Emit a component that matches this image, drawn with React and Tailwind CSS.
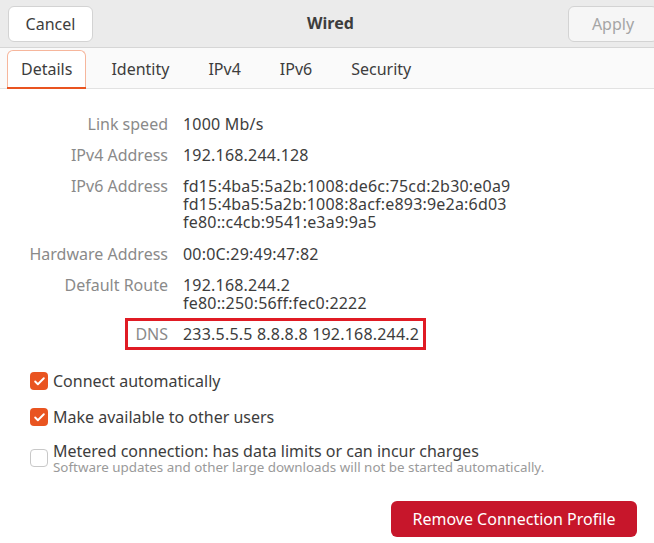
import { Check } from 'lucide-react'

const rows = [
  { label: 'Link speed', values: ['1000 Mb/s'] },
  { label: 'IPv4 Address', values: ['192.168.244.128'] },
  {
    label: 'IPv6 Address',
    values: ['fd15:4ba5:5a2b:1008:de6c:75cd:2b30:e0a9', 'fd15:4ba5:5a2b:1008:8acf:e893:9e2a:6d03', 'fe80::c4cb:9541:e3a9:9a5'],
  },
  { label: 'Hardware Address', values: ['00:0C:29:49:47:82'] },
  { label: 'Default Route', values: ['192.168.244.2', 'fe80::250:56ff:fec0:2222'] },
]

const tabs = ['Details', 'Identity', 'IPv4', 'IPv6', 'Security']

const CheckBox = ({ checked }) =>
  checked ? (
    <div className="w-[18px] h-[18px] rounded-[4px] bg-[#e95420] flex items-center justify-center shrink-0">
      <Check size={13} strokeWidth={3.5} className="text-white" />
    </div>
  ) : (
    <div className="w-[18px] h-[18px] rounded-[4px] border border-[#c8c8c8] bg-white shrink-0" />
  )

export default function App() {
  return (
    <div className="w-[654px] h-[543px] bg-white text-[#3d3d3d] overflow-hidden font-['Noto_Sans',sans-serif] text-[16px]">
      {/* Header */}
      <div className="h-[48px] bg-[#ebebeb] border-b border-[#d6d6d6] flex items-center px-2">
        <button className="h-[36px] w-[85px] rounded-[6px] bg-white border border-[#d3d3d3]">Cancel</button>
        <div className="flex-1 text-center font-bold text-[16px] -mt-[2px]">Wired</div>
        <button className="h-[36px] w-[90px] rounded-[6px] bg-[#f6f6f6] border border-[#d3d3d3] text-[#a5a5a5] mr-[-12px]">Apply</button>
      </div>

      {/* Tabs */}
      <div className="h-[41px] bg-[#fafafa] border-b border-[#e2e2e2] flex items-start gap-[11px] pl-[7px]">
        {tabs.map((t, i) => (
          <div key={t} className="flex flex-col">
            <div
              className={
                'h-[37px] mt-[2px] flex items-center px-[13px] rounded-t-[6px] ' +
                (i === 0 ? 'border border-b-0 border-[#f6b69c] bg-white' : 'border border-transparent')
              }
            >
              {t}
            </div>
            <div className={'h-[2px] ' + (i === 0 ? 'bg-[#e95420]' : '')} />
          </div>
        ))}
      </div>

      {/* Details */}
      <div className="pt-[26px] flex flex-col gap-[13px]">
        {rows.map((r) => (
          <div key={r.label} className={'flex leading-[18px] ' + (r.values.length === 3 ? 'mb-[1px]' : '')}>
            <div className="w-[168px] text-right text-[#8a8a8a] shrink-0">{r.label}</div>
            <div className="pl-[15px] flex flex-col tracking-[0.2px]">
              {r.values.map((v) => (
                <span key={v}>{v}</span>
              ))}
            </div>
          </div>
        ))}
        <div className="ml-[125px] w-[301px] h-[32px] border-[3px] border-[#e01b24] flex items-center leading-[18px] -mt-[7px]">
          <div className="w-[40px] text-right text-[#8a8a8a]">DNS</div>
          <div className="pl-[15px] tracking-[0.2px]">233.5.5.5 8.8.8.8 192.168.244.2</div>
        </div>
      </div>

      {/* Checkboxes */}
      <div className="pl-[30px] pt-[22px] flex flex-col">
        <label className="flex items-center gap-[5px] h-[18px]">
          <CheckBox checked />
          <span className="leading-[18px]">Connect automatically</span>
        </label>
        <label className="flex items-center gap-[5px] h-[18px] mt-[18px]">
          <CheckBox checked />
          <span className="leading-[18px]">Make available to other users</span>
        </label>
        <label className="flex items-start gap-[5px] mt-[16px]">
          <div className="mt-[7px]">
            <CheckBox />
          </div>
          <div className="flex flex-col">
            <span className="leading-[18px]">Metered connection: has data limits or can incur charges</span>
            <span className="text-[13.4px] leading-[15px] text-[#9a9a9a]">
              Software updates and other large downloads will not be started automatically.
            </span>
          </div>
        </label>
      </div>

      {/* Footer */}
      <div className="flex justify-end pr-[17px] pt-[26px]">
        <button className="h-[36px] w-[246px] rounded-[6px] bg-[#c7162b] text-white">Remove Connection Profile</button>
      </div>
    </div>
  )
}
